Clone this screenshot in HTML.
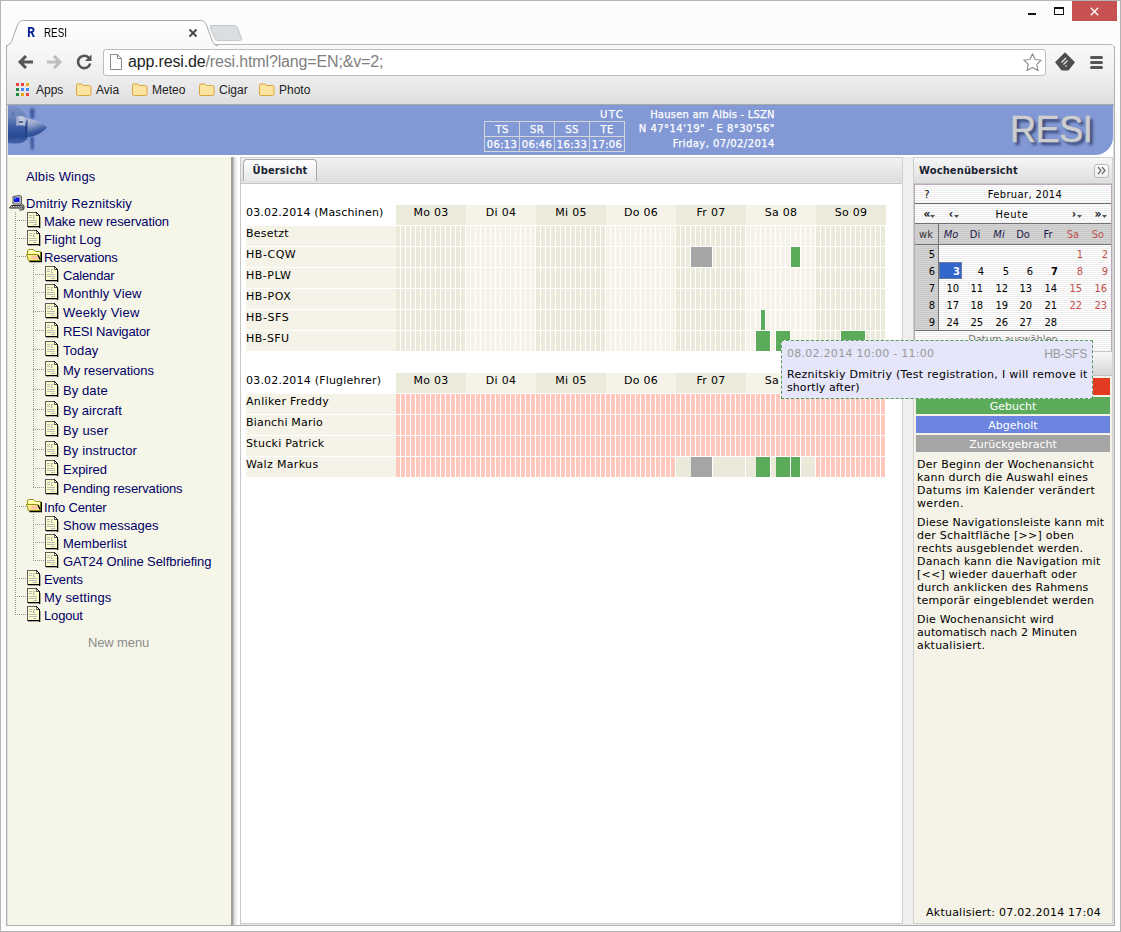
<!DOCTYPE html>
<html lang="en">
<head>
<meta charset="utf-8">
<title>RESI</title>
<style>
html,body{margin:0;padding:0;}
body{width:1121px;height:932px;position:relative;overflow:hidden;background:#fcfcfc;font-family:"DejaVu Sans","Liberation Sans",sans-serif;font-size:11px;color:#000;}
.abs{position:absolute;}
#win{position:absolute;left:0;top:0;width:1119px;height:930px;border:1px solid #b4b4b4;background:#fcfcfc;}
/* chrome */
#tab{position:absolute;left:7px;top:20px;width:212px;height:26px;}
#tabtitle{position:absolute;left:44px;top:26px;font:12px/15px "Liberation Sans",sans-serif;color:#000;transform:scaleX(.82);transform-origin:0 0;}
#toolbar{position:absolute;left:7px;top:44px;width:1107px;height:60px;border-radius:4px 4px 0 0;background:linear-gradient(#f9f9f9 0,#efefef 30px,#dedede 60px);border-top:1px solid #b9b9b9;box-sizing:border-box;}
#tbline{position:absolute;left:7px;top:104px;width:1107px;height:1px;background:#a9a9a9;}
#lb{position:absolute;left:6px;top:46px;width:1px;height:880px;background:#b0b0b0;}
#rb{position:absolute;left:1114px;top:46px;width:1px;height:880px;background:#b0b0b0;}
#lb2{position:absolute;left:7px;top:105px;width:1px;height:820px;background:#dedede;}
#rb2{position:absolute;left:1113px;top:105px;width:1px;height:820px;background:#dedede;}
#bb{position:absolute;left:6px;top:925px;width:1109px;height:1px;background:#b0b0b0;}
#urlbox{position:absolute;left:103px;top:49px;width:943px;height:27px;border:1px solid #bdbdbd;border-radius:3px;background:#fff;box-sizing:border-box;}
#url{position:absolute;left:128px;top:52px;font:16px/20px "Liberation Sans",sans-serif;color:#808080;letter-spacing:-0.15px;}
#url b{font-weight:normal;color:#222;}
.bm{position:absolute;top:83px;font:12px/14px "Liberation Sans",sans-serif;color:#222;}
/* page */
#page{position:absolute;left:8px;top:105px;width:1105px;height:820px;background:#fff;overflow:hidden;}
#hdr{position:absolute;left:0;top:0;width:1105px;height:50px;background:#8399d6;border-radius:0 0 18px 0;color:#fff;}
#hdr .t{position:absolute;font-size:10px;line-height:12px;color:#fff;white-space:nowrap;-webkit-text-stroke:0.25px #fff;}
#sun{position:absolute;left:476px;top:16px;border-collapse:collapse;}
#sun td{border:1px solid #d3d6d8;width:34px;height:14px;padding:0;text-align:center;font-size:10px;line-height:13px;color:#fff;letter-spacing:0.35px;-webkit-text-stroke:0.25px #fff;}
#resi{position:absolute;left:1002px;top:3px;font:36px/44px "Liberation Sans",sans-serif;color:#cecece;letter-spacing:-0.4px;-webkit-text-stroke:0.5px #cecece;text-shadow:3px 3px 3px rgba(40,50,95,.85);}
/* left nav */
#nav{position:absolute;left:0;top:52px;width:223px;height:768px;background:#f6f6e8;}
#split{position:absolute;left:223px;top:52px;width:7px;height:768px;background:linear-gradient(90deg,#a39b96 0,#a39b96 1.5px,#c4c4c8 2.5px,#dcdce0 3.5px,#ececf0 4.5px,#f4f4f6 6px,#fafaf0 6px,#fafaf0 7px);}
.ti{position:absolute;font:13px/16px "Liberation Sans",sans-serif;color:#000066;white-space:nowrap;}
.ic{position:absolute;width:16px;height:16px;}
.dv{position:absolute;width:1px;background-image:linear-gradient(#9a9a9a 50%,transparent 50%);background-size:1px 2px;}
.dh{position:absolute;height:1px;background-image:linear-gradient(90deg,#9a9a9a 50%,transparent 50%);background-size:2px 1px;}
/* main */
#main{position:absolute;left:232px;top:52px;width:663px;height:767px;background:#fff;border-left:1px solid #c6c6c6;border-right:1px solid #d0d0d0;border-bottom:1px solid #d0d0d0;box-sizing:border-box;}
#mtabs{position:absolute;left:0;top:0;width:661px;height:27px;background:linear-gradient(#f1f1f1,#dedede 24px,#e8e8e8 24px);border-bottom:1px solid #c4c4c4;border-top:1px solid #cfcfcf;box-sizing:border-box;}
#mtab{position:absolute;left:2px;top:1px;width:74px;height:22px;border:1px solid #a9a9a9;border-bottom:none;border-radius:4px 4px 0 0;background:linear-gradient(#ffffff,#e8e8e8 20px);box-sizing:border-box;font:bold 11px/21px "DejaVu Sans Condensed","DejaVu Sans",sans-serif;color:#1c2433;text-align:center;letter-spacing:0.15px;}
#gap{position:absolute;left:895px;top:52px;width:10px;height:768px;background:#efefef;}
#botstrip{position:absolute;left:232px;top:819px;width:873px;height:1px;background:#e6e6e6;}
.gl{position:absolute;font-size:11px;line-height:14px;white-space:nowrap;color:#000;}
.row{position:absolute;left:238px;width:640px;height:20px;background:#f5f3e7;}
.dh1,.dh2{position:absolute;width:70px;height:20px;text-align:center;font-size:11px;line-height:15px;letter-spacing:0.3px;}
.dh1{background:#eceadb;}
.dh2{background:#f5f3e7;}
.cells{position:absolute;left:388px;width:490px;height:20px;}
.bk{position:absolute;height:20px;}
/* right */
#right{position:absolute;left:905px;top:52px;width:200px;height:767px;background:#f5f3e7;border:1px solid #cfcfcf;box-sizing:border-box;}
#rh{position:absolute;left:0;top:0;width:198px;height:26px;background:linear-gradient(#f6f6f6,#dedede);border-bottom:1px solid #c4c4c4;box-sizing:border-box;}
#rh span{position:absolute;left:5px;top:6px;font:bold 11px/14px "DejaVu Sans Condensed","DejaVu Sans",sans-serif;color:#1c2433;letter-spacing:0.15px;}
#cal{position:absolute;left:0;top:26px;width:198px;height:168px;background:repeating-linear-gradient(#fff 0,#fff 1px,#ededed 1px,#ededed 2px);border:1px solid #b8a8b8;box-sizing:border-box;font-family:"DejaVu Sans Condensed","DejaVu Sans",sans-serif;}
.cr{position:absolute;left:0;width:196px;}
.c{position:absolute;font-size:11px;line-height:14px;white-space:nowrap;}
.leg{position:absolute;left:2px;width:194px;height:17px;color:#fff;text-align:center;font-size:11px;line-height:19px;overflow:hidden;}
.p{position:absolute;left:3px;font-size:11px;line-height:13px;color:#000;white-space:nowrap;}
#tip{position:absolute;left:773px;top:235px;width:312px;height:59px;box-sizing:border-box;border:1px dashed #5a9a5a;background:#e6e6fa;font-size:11px;line-height:13px;}

</style>
</head>
<body>
<div id="win"></div>
<div class="abs" style="left:1028px;top:13px;width:8px;height:2px;background:#111"></div>
<div class="abs" style="left:1054px;top:7px;width:10px;height:8px;box-sizing:border-box;border:1px solid #111;border-top-width:2px"></div>
<div class="abs" style="left:1072px;top:1px;width:45px;height:20px;background:#c75050"></div>
<svg class="abs" style="left:1090px;top:7px" width="9" height="9" viewBox="0 0 9 9"><path d="M0.8 0.8L8.2 8.2M8.2 0.8L0.8 8.2" stroke="#fff" stroke-width="1.4" fill="none"/></svg>
<div id="toolbar"></div><div id="tbline"></div><div id="lb"></div><div id="rb"></div><div id="lb2"></div><div id="rb2"></div><div id="bb"></div>
<svg class="abs" style="left:206px;top:23px" width="40" height="20" viewBox="0 0 40 20"><path d="M4.5 2.5 H28 q2.5 0 3.5 2.5 l4 10 q1 2.5 -2 2.5 H12 q-2.5 0 -3.5 -2.5 l-4 -10 q-1 -2.5 2 -2.5z" fill="#dadde2" stroke="#c4c7cc" stroke-width="1"/></svg>
<svg class="abs" style="left:4px;top:19px" width="222" height="28" viewBox="0 0 222 28"><defs><linearGradient id="tg" x1="0" y1="0" x2="0" y2="1"><stop offset="0" stop-color="#ffffff"/><stop offset="1" stop-color="#f8f8f8"/></linearGradient></defs><path d="M2 27 C6 26 7 24 8.5 20 L13.5 6 C15 2.5 16.5 1.5 20 1.5 H196 C199.5 1.5 201 2.5 202.5 6 L207.5 20 C209 24 210 26 214 27" fill="url(#tg)" stroke="#a8a8a8" stroke-width="1"/></svg>
<div class="abs" style="left:24px;top:24px;width:14px;height:16px;background:#fff"></div>
<div class="abs" style="left:27px;top:25px;font:bold 14px/16px 'Liberation Mono',monospace;color:#0a2394;transform:scaleX(.95);transform-origin:0 0">R</div>
<div id="tabtitle">RESI</div>
<svg class="abs" style="left:188px;top:28px" width="10" height="10" viewBox="0 0 10 10"><path d="M1.5 1.5L8.5 8.5M8.5 1.5L1.5 8.5" stroke="#444" stroke-width="1.8" fill="none"/></svg>
<svg class="abs" style="left:16px;top:53px" width="20" height="18" viewBox="0 0 20 18"><path d="M17 9H4.5M10 3L4 9l6 6" stroke="#555" stroke-width="3" fill="none" stroke-linejoin="miter"/></svg>
<svg class="abs" style="left:44px;top:53px" width="20" height="18" viewBox="0 0 20 18"><path d="M3 9H15.5M10 3l6 6l-6 6" stroke="#bdbdbd" stroke-width="3" fill="none"/></svg>
<svg class="abs" style="left:74px;top:52px" width="20" height="20" viewBox="0 0 20 20"><path d="M15.2 6.2A6.2 6.2 0 1 0 16.2 11.5" stroke="#555" stroke-width="2.6" fill="none"/><path d="M17.5 2.5V9H11z" fill="#555"/></svg>
<div id="urlbox"></div>
<svg class="abs" style="left:109px;top:53px" width="14" height="18" viewBox="0 0 14 18"><path d="M1.5 1.5H8.5L12.5 5.5V16.5H1.5z" fill="#fff" stroke="#8a8a8a" stroke-width="1"/><path d="M8.5 1.5V5.5H12.5" fill="none" stroke="#8a8a8a" stroke-width="1"/></svg>
<div id="url"><b>app.resi.de</b>/resi.html?lang=EN;&amp;v=2;</div>
<svg class="abs" style="left:1022px;top:52px" width="21" height="20" viewBox="0 0 21 20"><path d="M10.5 1.8l2.6 5.7 6.2.7-4.6 4.2 1.3 6.1-5.5-3.1-5.5 3.1 1.3-6.1L1.7 8.2l6.2-.7z" fill="#fff" stroke="#8c8c8c" stroke-width="1.1" stroke-linejoin="round"/></svg>
<svg class="abs" style="left:1054px;top:52px" width="22" height="20" viewBox="0 0 22 20"><path d="M11 1.2L20 10.2l-6 7.5H8L2 10.2z" fill="#4e4e4e" stroke="#4e4e4e" stroke-width="1.500" stroke-linejoin="round"/><path d="M7.5 10.5l4.5-4.5M9.5 12.5l4-4M11.5 14.5l1-1" stroke="#e9e9e9" stroke-width="1.300" fill="none"/></svg>
<div class="abs" style="left:1090px;top:56px;width:13px;height:3px;border-radius:1.5px;background:#555"></div>
<div class="abs" style="left:1090px;top:61px;width:13px;height:3px;border-radius:1.5px;background:#555"></div>
<div class="abs" style="left:1090px;top:66px;width:13px;height:3px;border-radius:1.5px;background:#555"></div>
<svg class="abs" style="left:15px;top:83px" width="15" height="14" viewBox="0 0 15 14"><rect x="1" y="0" width="3" height="3" fill="#e8453c"/><rect x="6" y="0" width="3" height="3" fill="#e8453c"/><rect x="11" y="0" width="3" height="3" fill="#f2a60d"/><rect x="1" y="5" width="3" height="3" fill="#1e8e3e"/><rect x="6" y="5" width="3" height="3" fill="#4a8af4"/><rect x="11" y="5" width="3" height="3" fill="#4a8af4"/><rect x="1" y="10" width="3" height="3" fill="#1e8e3e"/><rect x="6" y="10" width="3" height="3" fill="#f2a60d"/><rect x="11" y="10" width="3" height="3" fill="#e8453c"/></svg>
<div class="bm" style="left:36px">Apps</div>
<svg class="abs" style="left:75px;top:82px" width="17" height="15" viewBox="0 0 17 15"><path d="M1.5 3.5q0-1.5 1.5-1.5h4l1.5 1.5h6q1.5 0 1.5 1.5v7q0 1.5-1.5 1.5h-11.5q-1.5 0-1.5-1.5z" fill="#fbe3a0" stroke="#d9a53f" stroke-width="1"/></svg>
<div class="bm" style="left:96px">Avia</div>
<svg class="abs" style="left:131px;top:82px" width="17" height="15" viewBox="0 0 17 15"><path d="M1.5 3.5q0-1.5 1.5-1.5h4l1.5 1.5h6q1.5 0 1.5 1.5v7q0 1.5-1.5 1.5h-11.5q-1.5 0-1.5-1.5z" fill="#fbe3a0" stroke="#d9a53f" stroke-width="1"/></svg>
<div class="bm" style="left:152px">Meteo</div>
<svg class="abs" style="left:198px;top:82px" width="17" height="15" viewBox="0 0 17 15"><path d="M1.5 3.5q0-1.5 1.5-1.5h4l1.5 1.5h6q1.5 0 1.5 1.5v7q0 1.5-1.5 1.5h-11.5q-1.5 0-1.5-1.5z" fill="#fbe3a0" stroke="#d9a53f" stroke-width="1"/></svg>
<div class="bm" style="left:219px">Cigar</div>
<svg class="abs" style="left:258px;top:82px" width="17" height="15" viewBox="0 0 17 15"><path d="M1.5 3.5q0-1.5 1.5-1.5h4l1.5 1.5h6q1.5 0 1.5 1.5v7q0 1.5-1.5 1.5h-11.5q-1.5 0-1.5-1.5z" fill="#fbe3a0" stroke="#d9a53f" stroke-width="1"/></svg>
<div class="bm" style="left:279px">Photo</div>
<div id="page">
<div id="hdr">
<svg class="abs" style="left:0;top:0" width="56" height="50" viewBox="0 0 56 50">
<defs><linearGradient id="pg" x1="0" y1="0" x2="0" y2="1"><stop offset="0" stop-color="#7b90c4"/><stop offset=".3" stop-color="#6882bb"/><stop offset=".55" stop-color="#3c5ea6"/><stop offset=".8" stop-color="#274a93"/><stop offset="1" stop-color="#4666ae"/></linearGradient>
<linearGradient id="pg2" x1="0" y1="0" x2=".3" y2="1"><stop offset="0" stop-color="#c4cbdc"/><stop offset=".4" stop-color="#8b9cc6"/><stop offset=".75" stop-color="#3b5aa0"/><stop offset="1" stop-color="#2b4a90"/></linearGradient>
<linearGradient id="pg3" x1="0" y1="0" x2="1" y2="0"><stop offset="0" stop-color="#8ea0c8"/><stop offset=".5" stop-color="#d6dbe8"/><stop offset="1" stop-color="#9aa8cc"/></linearGradient>
<filter id="bl" x="-20%" y="-20%" width="140%" height="140%"><feGaussianBlur stdDeviation=".7"/></filter>
<filter id="bl2" x="-50%" y="-20%" width="200%" height="140%"><feGaussianBlur stdDeviation="1"/></filter></defs>
<g filter="url(#bl)">
<path d="M0 1 C7 1 14 3 17 9 C19 13 19.5 17 19.5 20 L19.5 30 C19 34 17 37 13 38 C8 39 4 38.5 0 38z" fill="url(#pg)"/>
<path d="M8 11.5 C12 10.5 16 11 19.5 13.5 L19.5 22 C16 20 11 20 8 21z" fill="url(#pg3)" opacity=".9"/>
<path d="M11 16 h4 v2 h-4z" fill="#3a4f86" opacity=".8"/>
<path d="M4 7 h2 v4 h-2z" fill="#566ea6" opacity=".7"/>
<path d="M19.5 13.5 C26 14 33 17 39 22.5 C34 28 27 31.5 19.5 32z" fill="url(#pg2)"/>
<path d="M17 22 C17 27 17.5 33 19.5 36 L19.5 14 C18 16 17 19 17 22z" fill="#1f3c82" opacity=".8"/>
</g>
<g filter="url(#bl2)">
<path d="M22 5 C23 2.5 26 2.5 26.5 5 L26 14 L22.5 13.5z" fill="#3b599f"/>
<path d="M22.5 32 L25.5 31 L25.5 43 C25 46 23.5 46 23 43z" fill="#2f4c92"/>
</g>
</svg>
<div class="t" style="right:488.9px;top:4px;letter-spacing:1.391px">UTC</div>
<table id="sun"><tr><td>TS</td><td>SR</td><td>SS</td><td>TE</td></tr><tr><td>06:13</td><td>06:46</td><td>16:33</td><td>17:06</td></tr></table>
<div class="t" style="right:338.2px;top:4px;letter-spacing:0.209px">Hausen am Albis - LSZN</div>
<div class="t" style="right:338.2px;top:18px;letter-spacing:0.466px">N 47°14'19" - E 8°30'56"</div>
<div class="t" style="right:338.2px;top:33px;letter-spacing:0.427px">Friday, 07/02/2014</div>
<div id="resi">RESI</div>
</div>
<div id="nav">
<div class="ti" style="left:18px;top:12px;letter-spacing:0.143px;">Albis Wings</div>
<svg class="ic" style="left:1px;top:38px" viewBox="0 0 16 16"><path d="M4 1.5L11 0.5L12.5 1.5V9H4z" fill="#c8c8c8" stroke="#555" stroke-width="1"/><rect x="5" y="2.500" width="5.500" height="4.500" fill="#1414e0"/><rect x="5.600" y="3.200" width="1.200" height="1" fill="#35d0f0"/><path d="M2.5 10.5H12.5L14 13H0.5z" fill="#fff" stroke="#222" stroke-width="1"/><path d="M3 11.5H12M2.5 12.3H12.5" stroke="#333" stroke-width=".7" stroke-dasharray="1 .7"/><path d="M12.5 9.5q2.5 0 2.5 3q0 2.5-3 2.5h-2" stroke="#444" stroke-width="1.200" fill="none"/></svg>
<div class="ti" style="left:18px;top:39px;letter-spacing:0.150px;">Dmitriy Reznitskiy</div>
<div class="dv" style="left:7px;top:55px;height:403px"></div>
<div class="dv" style="left:25px;top:107px;height:224px"></div>
<div class="dv" style="left:25px;top:357px;height:47px"></div>
<div class="dh" style="left:7px;top:63px;width:12px"></div>
<svg class="ic" style="left:19px;top:55px" viewBox="0 0 16 16" shape-rendering="crispEdges"><path d="M1 1H9L12 4V15H1z" fill="#fcfccb"/><path d="M9 1V4H12z" fill="#fff"/><rect x="0" y="0" width="1" height="15" fill="#5e5e5e"/><rect x="0" y="0" width="9" height="1" fill="#5e5e5e"/><rect x="9" y="0" width="1" height="1" fill="#000"/><rect x="10" y="1" width="1" height="1" fill="#000"/><rect x="11" y="2" width="1" height="1" fill="#000"/><rect x="12" y="3" width="1" height="1" fill="#000"/><rect x="9" y="1" width="1" height="3" fill="#777"/><rect x="9" y="3" width="3" height="1" fill="#555"/><rect x="12" y="4" width="1" height="12" fill="#000"/><rect x="13" y="5" width="1" height="11" fill="#000" opacity=".3"/><rect x="1" y="15" width="12" height="1" fill="#000" opacity=".3"/><rect x="1" y="14" width="12" height="1" fill="#000"/><rect x="2" y="3" width="3" height="1" fill="#bcbcbc"/><rect x="2" y="5" width="3" height="1" fill="#bcbcbc"/><rect x="6" y="3" width="2" height="1" fill="#bcbcbc"/><rect x="6" y="3" width="1" height="3" fill="#bcbcbc"/><rect x="6" y="6" width="2" height="1" fill="#bcbcbc"/><rect x="2" y="8" width="8" height="1" fill="#bcbcbc"/><rect x="2" y="10" width="8" height="1" fill="#bcbcbc"/><rect x="6" y="12" width="4" height="1" fill="#bcbcbc"/></svg>
<div class="ti" style="left:36px;top:57px;letter-spacing:-0.109px;">Make new reservation</div>
<div class="dh" style="left:7px;top:81px;width:12px"></div>
<svg class="ic" style="left:19px;top:73px" viewBox="0 0 16 16" shape-rendering="crispEdges"><path d="M1 1H9L12 4V15H1z" fill="#fcfccb"/><path d="M9 1V4H12z" fill="#fff"/><rect x="0" y="0" width="1" height="15" fill="#5e5e5e"/><rect x="0" y="0" width="9" height="1" fill="#5e5e5e"/><rect x="9" y="0" width="1" height="1" fill="#000"/><rect x="10" y="1" width="1" height="1" fill="#000"/><rect x="11" y="2" width="1" height="1" fill="#000"/><rect x="12" y="3" width="1" height="1" fill="#000"/><rect x="9" y="1" width="1" height="3" fill="#777"/><rect x="9" y="3" width="3" height="1" fill="#555"/><rect x="12" y="4" width="1" height="12" fill="#000"/><rect x="13" y="5" width="1" height="11" fill="#000" opacity=".3"/><rect x="1" y="15" width="12" height="1" fill="#000" opacity=".3"/><rect x="1" y="14" width="12" height="1" fill="#000"/><rect x="2" y="3" width="3" height="1" fill="#bcbcbc"/><rect x="2" y="5" width="3" height="1" fill="#bcbcbc"/><rect x="6" y="3" width="2" height="1" fill="#bcbcbc"/><rect x="6" y="3" width="1" height="3" fill="#bcbcbc"/><rect x="6" y="6" width="2" height="1" fill="#bcbcbc"/><rect x="2" y="8" width="8" height="1" fill="#bcbcbc"/><rect x="2" y="10" width="8" height="1" fill="#bcbcbc"/><rect x="6" y="12" width="4" height="1" fill="#bcbcbc"/></svg>
<div class="ti" style="left:36px;top:75px;letter-spacing:-0.009px;">Flight Log</div>
<div class="dh" style="left:7px;top:99px;width:12px"></div>
<svg class="ic" style="left:18px;top:91px" viewBox="0 0 16 16"><path d="M1.5 6V2.5L3 1.5H7.5L9.5 3.5H14.5V12.5H3" fill="#ffff9e" stroke="#8e8e12" stroke-width="1"/><path d="M3 2.5H7M10 4.5H13.5" stroke="#ffffff" stroke-width="1" fill="none"/><path d="M15.5 4V13.5H3.5" stroke="#000" stroke-width="1.300" fill="none"/><path d="M0.5 6.5H11.5L14 11V12.5H2.5z" fill="#ffee90" stroke="#8e8e12" stroke-width="1"/><path d="M6 7.5H11L13 11.5H4.5z" fill="#ffbfa5" opacity=".85"/><path d="M12 7L14.2 11.5" stroke="#000" stroke-width="1.300" fill="none"/></svg>
<div class="ti" style="left:36px;top:93px;letter-spacing:-0.198px;">Reservations</div>
<div class="dh" style="left:7px;top:349px;width:12px"></div>
<svg class="ic" style="left:18px;top:341px" viewBox="0 0 16 16"><path d="M1.5 6V2.5L3 1.5H7.5L9.5 3.5H14.5V12.5H3" fill="#ffff9e" stroke="#8e8e12" stroke-width="1"/><path d="M3 2.5H7M10 4.5H13.5" stroke="#ffffff" stroke-width="1" fill="none"/><path d="M15.5 4V13.5H3.5" stroke="#000" stroke-width="1.300" fill="none"/><path d="M0.5 6.5H11.5L14 11V12.5H2.5z" fill="#ffee90" stroke="#8e8e12" stroke-width="1"/><path d="M6 7.5H11L13 11.5H4.5z" fill="#ffbfa5" opacity=".85"/><path d="M12 7L14.2 11.5" stroke="#000" stroke-width="1.300" fill="none"/></svg>
<div class="ti" style="left:36px;top:343px;letter-spacing:-0.166px;">Info Center</div>
<div class="dh" style="left:7px;top:421px;width:12px"></div>
<svg class="ic" style="left:19px;top:413px" viewBox="0 0 16 16" shape-rendering="crispEdges"><path d="M1 1H9L12 4V15H1z" fill="#fcfccb"/><path d="M9 1V4H12z" fill="#fff"/><rect x="0" y="0" width="1" height="15" fill="#5e5e5e"/><rect x="0" y="0" width="9" height="1" fill="#5e5e5e"/><rect x="9" y="0" width="1" height="1" fill="#000"/><rect x="10" y="1" width="1" height="1" fill="#000"/><rect x="11" y="2" width="1" height="1" fill="#000"/><rect x="12" y="3" width="1" height="1" fill="#000"/><rect x="9" y="1" width="1" height="3" fill="#777"/><rect x="9" y="3" width="3" height="1" fill="#555"/><rect x="12" y="4" width="1" height="12" fill="#000"/><rect x="13" y="5" width="1" height="11" fill="#000" opacity=".3"/><rect x="1" y="15" width="12" height="1" fill="#000" opacity=".3"/><rect x="1" y="14" width="12" height="1" fill="#000"/><rect x="2" y="3" width="3" height="1" fill="#bcbcbc"/><rect x="2" y="5" width="3" height="1" fill="#bcbcbc"/><rect x="6" y="3" width="2" height="1" fill="#bcbcbc"/><rect x="6" y="3" width="1" height="3" fill="#bcbcbc"/><rect x="6" y="6" width="2" height="1" fill="#bcbcbc"/><rect x="2" y="8" width="8" height="1" fill="#bcbcbc"/><rect x="2" y="10" width="8" height="1" fill="#bcbcbc"/><rect x="6" y="12" width="4" height="1" fill="#bcbcbc"/></svg>
<div class="ti" style="left:36px;top:415px;letter-spacing:-0.158px;">Events</div>
<div class="dh" style="left:7px;top:439px;width:12px"></div>
<svg class="ic" style="left:19px;top:431px" viewBox="0 0 16 16" shape-rendering="crispEdges"><path d="M1 1H9L12 4V15H1z" fill="#fcfccb"/><path d="M9 1V4H12z" fill="#fff"/><rect x="0" y="0" width="1" height="15" fill="#5e5e5e"/><rect x="0" y="0" width="9" height="1" fill="#5e5e5e"/><rect x="9" y="0" width="1" height="1" fill="#000"/><rect x="10" y="1" width="1" height="1" fill="#000"/><rect x="11" y="2" width="1" height="1" fill="#000"/><rect x="12" y="3" width="1" height="1" fill="#000"/><rect x="9" y="1" width="1" height="3" fill="#777"/><rect x="9" y="3" width="3" height="1" fill="#555"/><rect x="12" y="4" width="1" height="12" fill="#000"/><rect x="13" y="5" width="1" height="11" fill="#000" opacity=".3"/><rect x="1" y="15" width="12" height="1" fill="#000" opacity=".3"/><rect x="1" y="14" width="12" height="1" fill="#000"/><rect x="2" y="3" width="3" height="1" fill="#bcbcbc"/><rect x="2" y="5" width="3" height="1" fill="#bcbcbc"/><rect x="6" y="3" width="2" height="1" fill="#bcbcbc"/><rect x="6" y="3" width="1" height="3" fill="#bcbcbc"/><rect x="6" y="6" width="2" height="1" fill="#bcbcbc"/><rect x="2" y="8" width="8" height="1" fill="#bcbcbc"/><rect x="2" y="10" width="8" height="1" fill="#bcbcbc"/><rect x="6" y="12" width="4" height="1" fill="#bcbcbc"/></svg>
<div class="ti" style="left:36px;top:433px;letter-spacing:0.159px;">My settings</div>
<div class="dh" style="left:7px;top:457px;width:12px"></div>
<svg class="ic" style="left:19px;top:449px" viewBox="0 0 16 16" shape-rendering="crispEdges"><path d="M1 1H9L12 4V15H1z" fill="#fcfccb"/><path d="M9 1V4H12z" fill="#fff"/><rect x="0" y="0" width="1" height="15" fill="#5e5e5e"/><rect x="0" y="0" width="9" height="1" fill="#5e5e5e"/><rect x="9" y="0" width="1" height="1" fill="#000"/><rect x="10" y="1" width="1" height="1" fill="#000"/><rect x="11" y="2" width="1" height="1" fill="#000"/><rect x="12" y="3" width="1" height="1" fill="#000"/><rect x="9" y="1" width="1" height="3" fill="#777"/><rect x="9" y="3" width="3" height="1" fill="#555"/><rect x="12" y="4" width="1" height="12" fill="#000"/><rect x="13" y="5" width="1" height="11" fill="#000" opacity=".3"/><rect x="1" y="15" width="12" height="1" fill="#000" opacity=".3"/><rect x="1" y="14" width="12" height="1" fill="#000"/><rect x="2" y="3" width="3" height="1" fill="#bcbcbc"/><rect x="2" y="5" width="3" height="1" fill="#bcbcbc"/><rect x="6" y="3" width="2" height="1" fill="#bcbcbc"/><rect x="6" y="3" width="1" height="3" fill="#bcbcbc"/><rect x="6" y="6" width="2" height="1" fill="#bcbcbc"/><rect x="2" y="8" width="8" height="1" fill="#bcbcbc"/><rect x="2" y="10" width="8" height="1" fill="#bcbcbc"/><rect x="6" y="12" width="4" height="1" fill="#bcbcbc"/></svg>
<div class="ti" style="left:36px;top:451px;letter-spacing:-0.161px;">Logout</div>
<div class="dh" style="left:25px;top:117px;width:12px"></div>
<svg class="ic" style="left:37px;top:109px" viewBox="0 0 16 16" shape-rendering="crispEdges"><path d="M1 1H9L12 4V15H1z" fill="#fcfccb"/><path d="M9 1V4H12z" fill="#fff"/><rect x="0" y="0" width="1" height="15" fill="#5e5e5e"/><rect x="0" y="0" width="9" height="1" fill="#5e5e5e"/><rect x="9" y="0" width="1" height="1" fill="#000"/><rect x="10" y="1" width="1" height="1" fill="#000"/><rect x="11" y="2" width="1" height="1" fill="#000"/><rect x="12" y="3" width="1" height="1" fill="#000"/><rect x="9" y="1" width="1" height="3" fill="#777"/><rect x="9" y="3" width="3" height="1" fill="#555"/><rect x="12" y="4" width="1" height="12" fill="#000"/><rect x="13" y="5" width="1" height="11" fill="#000" opacity=".3"/><rect x="1" y="15" width="12" height="1" fill="#000" opacity=".3"/><rect x="1" y="14" width="12" height="1" fill="#000"/><rect x="2" y="3" width="3" height="1" fill="#bcbcbc"/><rect x="2" y="5" width="3" height="1" fill="#bcbcbc"/><rect x="6" y="3" width="2" height="1" fill="#bcbcbc"/><rect x="6" y="3" width="1" height="3" fill="#bcbcbc"/><rect x="6" y="6" width="2" height="1" fill="#bcbcbc"/><rect x="2" y="8" width="8" height="1" fill="#bcbcbc"/><rect x="2" y="10" width="8" height="1" fill="#bcbcbc"/><rect x="6" y="12" width="4" height="1" fill="#bcbcbc"/></svg>
<div class="ti" style="left:55px;top:111px;letter-spacing:-0.158px;">Calendar</div>
<div class="dh" style="left:25px;top:135px;width:12px"></div>
<svg class="ic" style="left:37px;top:127px" viewBox="0 0 16 16" shape-rendering="crispEdges"><path d="M1 1H9L12 4V15H1z" fill="#fcfccb"/><path d="M9 1V4H12z" fill="#fff"/><rect x="0" y="0" width="1" height="15" fill="#5e5e5e"/><rect x="0" y="0" width="9" height="1" fill="#5e5e5e"/><rect x="9" y="0" width="1" height="1" fill="#000"/><rect x="10" y="1" width="1" height="1" fill="#000"/><rect x="11" y="2" width="1" height="1" fill="#000"/><rect x="12" y="3" width="1" height="1" fill="#000"/><rect x="9" y="1" width="1" height="3" fill="#777"/><rect x="9" y="3" width="3" height="1" fill="#555"/><rect x="12" y="4" width="1" height="12" fill="#000"/><rect x="13" y="5" width="1" height="11" fill="#000" opacity=".3"/><rect x="1" y="15" width="12" height="1" fill="#000" opacity=".3"/><rect x="1" y="14" width="12" height="1" fill="#000"/><rect x="2" y="3" width="3" height="1" fill="#bcbcbc"/><rect x="2" y="5" width="3" height="1" fill="#bcbcbc"/><rect x="6" y="3" width="2" height="1" fill="#bcbcbc"/><rect x="6" y="3" width="1" height="3" fill="#bcbcbc"/><rect x="6" y="6" width="2" height="1" fill="#bcbcbc"/><rect x="2" y="8" width="8" height="1" fill="#bcbcbc"/><rect x="2" y="10" width="8" height="1" fill="#bcbcbc"/><rect x="6" y="12" width="4" height="1" fill="#bcbcbc"/></svg>
<div class="ti" style="left:55px;top:129px;letter-spacing:0.118px;">Monthly View</div>
<div class="dh" style="left:25px;top:154px;width:12px"></div>
<svg class="ic" style="left:37px;top:146px" viewBox="0 0 16 16" shape-rendering="crispEdges"><path d="M1 1H9L12 4V15H1z" fill="#fcfccb"/><path d="M9 1V4H12z" fill="#fff"/><rect x="0" y="0" width="1" height="15" fill="#5e5e5e"/><rect x="0" y="0" width="9" height="1" fill="#5e5e5e"/><rect x="9" y="0" width="1" height="1" fill="#000"/><rect x="10" y="1" width="1" height="1" fill="#000"/><rect x="11" y="2" width="1" height="1" fill="#000"/><rect x="12" y="3" width="1" height="1" fill="#000"/><rect x="9" y="1" width="1" height="3" fill="#777"/><rect x="9" y="3" width="3" height="1" fill="#555"/><rect x="12" y="4" width="1" height="12" fill="#000"/><rect x="13" y="5" width="1" height="11" fill="#000" opacity=".3"/><rect x="1" y="15" width="12" height="1" fill="#000" opacity=".3"/><rect x="1" y="14" width="12" height="1" fill="#000"/><rect x="2" y="3" width="3" height="1" fill="#bcbcbc"/><rect x="2" y="5" width="3" height="1" fill="#bcbcbc"/><rect x="6" y="3" width="2" height="1" fill="#bcbcbc"/><rect x="6" y="3" width="1" height="3" fill="#bcbcbc"/><rect x="6" y="6" width="2" height="1" fill="#bcbcbc"/><rect x="2" y="8" width="8" height="1" fill="#bcbcbc"/><rect x="2" y="10" width="8" height="1" fill="#bcbcbc"/><rect x="6" y="12" width="4" height="1" fill="#bcbcbc"/></svg>
<div class="ti" style="left:55px;top:148px;letter-spacing:0.233px;">Weekly View</div>
<div class="dh" style="left:25px;top:173px;width:12px"></div>
<svg class="ic" style="left:37px;top:165px" viewBox="0 0 16 16" shape-rendering="crispEdges"><path d="M1 1H9L12 4V15H1z" fill="#fcfccb"/><path d="M9 1V4H12z" fill="#fff"/><rect x="0" y="0" width="1" height="15" fill="#5e5e5e"/><rect x="0" y="0" width="9" height="1" fill="#5e5e5e"/><rect x="9" y="0" width="1" height="1" fill="#000"/><rect x="10" y="1" width="1" height="1" fill="#000"/><rect x="11" y="2" width="1" height="1" fill="#000"/><rect x="12" y="3" width="1" height="1" fill="#000"/><rect x="9" y="1" width="1" height="3" fill="#777"/><rect x="9" y="3" width="3" height="1" fill="#555"/><rect x="12" y="4" width="1" height="12" fill="#000"/><rect x="13" y="5" width="1" height="11" fill="#000" opacity=".3"/><rect x="1" y="15" width="12" height="1" fill="#000" opacity=".3"/><rect x="1" y="14" width="12" height="1" fill="#000"/><rect x="2" y="3" width="3" height="1" fill="#bcbcbc"/><rect x="2" y="5" width="3" height="1" fill="#bcbcbc"/><rect x="6" y="3" width="2" height="1" fill="#bcbcbc"/><rect x="6" y="3" width="1" height="3" fill="#bcbcbc"/><rect x="6" y="6" width="2" height="1" fill="#bcbcbc"/><rect x="2" y="8" width="8" height="1" fill="#bcbcbc"/><rect x="2" y="10" width="8" height="1" fill="#bcbcbc"/><rect x="6" y="12" width="4" height="1" fill="#bcbcbc"/></svg>
<div class="ti" style="left:55px;top:167px;letter-spacing:-0.178px;">RESI Navigator</div>
<div class="dh" style="left:25px;top:192px;width:12px"></div>
<svg class="ic" style="left:37px;top:184px" viewBox="0 0 16 16" shape-rendering="crispEdges"><path d="M1 1H9L12 4V15H1z" fill="#fcfccb"/><path d="M9 1V4H12z" fill="#fff"/><rect x="0" y="0" width="1" height="15" fill="#5e5e5e"/><rect x="0" y="0" width="9" height="1" fill="#5e5e5e"/><rect x="9" y="0" width="1" height="1" fill="#000"/><rect x="10" y="1" width="1" height="1" fill="#000"/><rect x="11" y="2" width="1" height="1" fill="#000"/><rect x="12" y="3" width="1" height="1" fill="#000"/><rect x="9" y="1" width="1" height="3" fill="#777"/><rect x="9" y="3" width="3" height="1" fill="#555"/><rect x="12" y="4" width="1" height="12" fill="#000"/><rect x="13" y="5" width="1" height="11" fill="#000" opacity=".3"/><rect x="1" y="15" width="12" height="1" fill="#000" opacity=".3"/><rect x="1" y="14" width="12" height="1" fill="#000"/><rect x="2" y="3" width="3" height="1" fill="#bcbcbc"/><rect x="2" y="5" width="3" height="1" fill="#bcbcbc"/><rect x="6" y="3" width="2" height="1" fill="#bcbcbc"/><rect x="6" y="3" width="1" height="3" fill="#bcbcbc"/><rect x="6" y="6" width="2" height="1" fill="#bcbcbc"/><rect x="2" y="8" width="8" height="1" fill="#bcbcbc"/><rect x="2" y="10" width="8" height="1" fill="#bcbcbc"/><rect x="6" y="12" width="4" height="1" fill="#bcbcbc"/></svg>
<div class="ti" style="left:55px;top:186px;letter-spacing:0.159px;">Today</div>
<div class="dh" style="left:25px;top:212px;width:12px"></div>
<svg class="ic" style="left:37px;top:204px" viewBox="0 0 16 16" shape-rendering="crispEdges"><path d="M1 1H9L12 4V15H1z" fill="#fcfccb"/><path d="M9 1V4H12z" fill="#fff"/><rect x="0" y="0" width="1" height="15" fill="#5e5e5e"/><rect x="0" y="0" width="9" height="1" fill="#5e5e5e"/><rect x="9" y="0" width="1" height="1" fill="#000"/><rect x="10" y="1" width="1" height="1" fill="#000"/><rect x="11" y="2" width="1" height="1" fill="#000"/><rect x="12" y="3" width="1" height="1" fill="#000"/><rect x="9" y="1" width="1" height="3" fill="#777"/><rect x="9" y="3" width="3" height="1" fill="#555"/><rect x="12" y="4" width="1" height="12" fill="#000"/><rect x="13" y="5" width="1" height="11" fill="#000" opacity=".3"/><rect x="1" y="15" width="12" height="1" fill="#000" opacity=".3"/><rect x="1" y="14" width="12" height="1" fill="#000"/><rect x="2" y="3" width="3" height="1" fill="#bcbcbc"/><rect x="2" y="5" width="3" height="1" fill="#bcbcbc"/><rect x="6" y="3" width="2" height="1" fill="#bcbcbc"/><rect x="6" y="3" width="1" height="3" fill="#bcbcbc"/><rect x="6" y="6" width="2" height="1" fill="#bcbcbc"/><rect x="2" y="8" width="8" height="1" fill="#bcbcbc"/><rect x="2" y="10" width="8" height="1" fill="#bcbcbc"/><rect x="6" y="12" width="4" height="1" fill="#bcbcbc"/></svg>
<div class="ti" style="left:55px;top:206px;letter-spacing:-0.057px;">My reservations</div>
<div class="dh" style="left:25px;top:232px;width:12px"></div>
<svg class="ic" style="left:37px;top:224px" viewBox="0 0 16 16" shape-rendering="crispEdges"><path d="M1 1H9L12 4V15H1z" fill="#fcfccb"/><path d="M9 1V4H12z" fill="#fff"/><rect x="0" y="0" width="1" height="15" fill="#5e5e5e"/><rect x="0" y="0" width="9" height="1" fill="#5e5e5e"/><rect x="9" y="0" width="1" height="1" fill="#000"/><rect x="10" y="1" width="1" height="1" fill="#000"/><rect x="11" y="2" width="1" height="1" fill="#000"/><rect x="12" y="3" width="1" height="1" fill="#000"/><rect x="9" y="1" width="1" height="3" fill="#777"/><rect x="9" y="3" width="3" height="1" fill="#555"/><rect x="12" y="4" width="1" height="12" fill="#000"/><rect x="13" y="5" width="1" height="11" fill="#000" opacity=".3"/><rect x="1" y="15" width="12" height="1" fill="#000" opacity=".3"/><rect x="1" y="14" width="12" height="1" fill="#000"/><rect x="2" y="3" width="3" height="1" fill="#bcbcbc"/><rect x="2" y="5" width="3" height="1" fill="#bcbcbc"/><rect x="6" y="3" width="2" height="1" fill="#bcbcbc"/><rect x="6" y="3" width="1" height="3" fill="#bcbcbc"/><rect x="6" y="6" width="2" height="1" fill="#bcbcbc"/><rect x="2" y="8" width="8" height="1" fill="#bcbcbc"/><rect x="2" y="10" width="8" height="1" fill="#bcbcbc"/><rect x="6" y="12" width="4" height="1" fill="#bcbcbc"/></svg>
<div class="ti" style="left:55px;top:226px;letter-spacing:0.087px;">By date</div>
<div class="dh" style="left:25px;top:252px;width:12px"></div>
<svg class="ic" style="left:37px;top:244px" viewBox="0 0 16 16" shape-rendering="crispEdges"><path d="M1 1H9L12 4V15H1z" fill="#fcfccb"/><path d="M9 1V4H12z" fill="#fff"/><rect x="0" y="0" width="1" height="15" fill="#5e5e5e"/><rect x="0" y="0" width="9" height="1" fill="#5e5e5e"/><rect x="9" y="0" width="1" height="1" fill="#000"/><rect x="10" y="1" width="1" height="1" fill="#000"/><rect x="11" y="2" width="1" height="1" fill="#000"/><rect x="12" y="3" width="1" height="1" fill="#000"/><rect x="9" y="1" width="1" height="3" fill="#777"/><rect x="9" y="3" width="3" height="1" fill="#555"/><rect x="12" y="4" width="1" height="12" fill="#000"/><rect x="13" y="5" width="1" height="11" fill="#000" opacity=".3"/><rect x="1" y="15" width="12" height="1" fill="#000" opacity=".3"/><rect x="1" y="14" width="12" height="1" fill="#000"/><rect x="2" y="3" width="3" height="1" fill="#bcbcbc"/><rect x="2" y="5" width="3" height="1" fill="#bcbcbc"/><rect x="6" y="3" width="2" height="1" fill="#bcbcbc"/><rect x="6" y="3" width="1" height="3" fill="#bcbcbc"/><rect x="6" y="6" width="2" height="1" fill="#bcbcbc"/><rect x="2" y="8" width="8" height="1" fill="#bcbcbc"/><rect x="2" y="10" width="8" height="1" fill="#bcbcbc"/><rect x="6" y="12" width="4" height="1" fill="#bcbcbc"/></svg>
<div class="ti" style="left:55px;top:246px;letter-spacing:0.026px;">By aircraft</div>
<div class="dh" style="left:25px;top:272px;width:12px"></div>
<svg class="ic" style="left:37px;top:264px" viewBox="0 0 16 16" shape-rendering="crispEdges"><path d="M1 1H9L12 4V15H1z" fill="#fcfccb"/><path d="M9 1V4H12z" fill="#fff"/><rect x="0" y="0" width="1" height="15" fill="#5e5e5e"/><rect x="0" y="0" width="9" height="1" fill="#5e5e5e"/><rect x="9" y="0" width="1" height="1" fill="#000"/><rect x="10" y="1" width="1" height="1" fill="#000"/><rect x="11" y="2" width="1" height="1" fill="#000"/><rect x="12" y="3" width="1" height="1" fill="#000"/><rect x="9" y="1" width="1" height="3" fill="#777"/><rect x="9" y="3" width="3" height="1" fill="#555"/><rect x="12" y="4" width="1" height="12" fill="#000"/><rect x="13" y="5" width="1" height="11" fill="#000" opacity=".3"/><rect x="1" y="15" width="12" height="1" fill="#000" opacity=".3"/><rect x="1" y="14" width="12" height="1" fill="#000"/><rect x="2" y="3" width="3" height="1" fill="#bcbcbc"/><rect x="2" y="5" width="3" height="1" fill="#bcbcbc"/><rect x="6" y="3" width="2" height="1" fill="#bcbcbc"/><rect x="6" y="3" width="1" height="3" fill="#bcbcbc"/><rect x="6" y="6" width="2" height="1" fill="#bcbcbc"/><rect x="2" y="8" width="8" height="1" fill="#bcbcbc"/><rect x="2" y="10" width="8" height="1" fill="#bcbcbc"/><rect x="6" y="12" width="4" height="1" fill="#bcbcbc"/></svg>
<div class="ti" style="left:55px;top:266px;letter-spacing:0.203px;">By user</div>
<div class="dh" style="left:25px;top:292px;width:12px"></div>
<svg class="ic" style="left:37px;top:284px" viewBox="0 0 16 16" shape-rendering="crispEdges"><path d="M1 1H9L12 4V15H1z" fill="#fcfccb"/><path d="M9 1V4H12z" fill="#fff"/><rect x="0" y="0" width="1" height="15" fill="#5e5e5e"/><rect x="0" y="0" width="9" height="1" fill="#5e5e5e"/><rect x="9" y="0" width="1" height="1" fill="#000"/><rect x="10" y="1" width="1" height="1" fill="#000"/><rect x="11" y="2" width="1" height="1" fill="#000"/><rect x="12" y="3" width="1" height="1" fill="#000"/><rect x="9" y="1" width="1" height="3" fill="#777"/><rect x="9" y="3" width="3" height="1" fill="#555"/><rect x="12" y="4" width="1" height="12" fill="#000"/><rect x="13" y="5" width="1" height="11" fill="#000" opacity=".3"/><rect x="1" y="15" width="12" height="1" fill="#000" opacity=".3"/><rect x="1" y="14" width="12" height="1" fill="#000"/><rect x="2" y="3" width="3" height="1" fill="#bcbcbc"/><rect x="2" y="5" width="3" height="1" fill="#bcbcbc"/><rect x="6" y="3" width="2" height="1" fill="#bcbcbc"/><rect x="6" y="3" width="1" height="3" fill="#bcbcbc"/><rect x="6" y="6" width="2" height="1" fill="#bcbcbc"/><rect x="2" y="8" width="8" height="1" fill="#bcbcbc"/><rect x="2" y="10" width="8" height="1" fill="#bcbcbc"/><rect x="6" y="12" width="4" height="1" fill="#bcbcbc"/></svg>
<div class="ti" style="left:55px;top:286px;letter-spacing:0.142px;">By instructor</div>
<div class="dh" style="left:25px;top:311px;width:12px"></div>
<svg class="ic" style="left:37px;top:303px" viewBox="0 0 16 16" shape-rendering="crispEdges"><path d="M1 1H9L12 4V15H1z" fill="#fcfccb"/><path d="M9 1V4H12z" fill="#fff"/><rect x="0" y="0" width="1" height="15" fill="#5e5e5e"/><rect x="0" y="0" width="9" height="1" fill="#5e5e5e"/><rect x="9" y="0" width="1" height="1" fill="#000"/><rect x="10" y="1" width="1" height="1" fill="#000"/><rect x="11" y="2" width="1" height="1" fill="#000"/><rect x="12" y="3" width="1" height="1" fill="#000"/><rect x="9" y="1" width="1" height="3" fill="#777"/><rect x="9" y="3" width="3" height="1" fill="#555"/><rect x="12" y="4" width="1" height="12" fill="#000"/><rect x="13" y="5" width="1" height="11" fill="#000" opacity=".3"/><rect x="1" y="15" width="12" height="1" fill="#000" opacity=".3"/><rect x="1" y="14" width="12" height="1" fill="#000"/><rect x="2" y="3" width="3" height="1" fill="#bcbcbc"/><rect x="2" y="5" width="3" height="1" fill="#bcbcbc"/><rect x="6" y="3" width="2" height="1" fill="#bcbcbc"/><rect x="6" y="3" width="1" height="3" fill="#bcbcbc"/><rect x="6" y="6" width="2" height="1" fill="#bcbcbc"/><rect x="2" y="8" width="8" height="1" fill="#bcbcbc"/><rect x="2" y="10" width="8" height="1" fill="#bcbcbc"/><rect x="6" y="12" width="4" height="1" fill="#bcbcbc"/></svg>
<div class="ti" style="left:55px;top:305px;letter-spacing:-0.011px;">Expired</div>
<div class="dh" style="left:25px;top:330px;width:12px"></div>
<svg class="ic" style="left:37px;top:322px" viewBox="0 0 16 16" shape-rendering="crispEdges"><path d="M1 1H9L12 4V15H1z" fill="#fcfccb"/><path d="M9 1V4H12z" fill="#fff"/><rect x="0" y="0" width="1" height="15" fill="#5e5e5e"/><rect x="0" y="0" width="9" height="1" fill="#5e5e5e"/><rect x="9" y="0" width="1" height="1" fill="#000"/><rect x="10" y="1" width="1" height="1" fill="#000"/><rect x="11" y="2" width="1" height="1" fill="#000"/><rect x="12" y="3" width="1" height="1" fill="#000"/><rect x="9" y="1" width="1" height="3" fill="#777"/><rect x="9" y="3" width="3" height="1" fill="#555"/><rect x="12" y="4" width="1" height="12" fill="#000"/><rect x="13" y="5" width="1" height="11" fill="#000" opacity=".3"/><rect x="1" y="15" width="12" height="1" fill="#000" opacity=".3"/><rect x="1" y="14" width="12" height="1" fill="#000"/><rect x="2" y="3" width="3" height="1" fill="#bcbcbc"/><rect x="2" y="5" width="3" height="1" fill="#bcbcbc"/><rect x="6" y="3" width="2" height="1" fill="#bcbcbc"/><rect x="6" y="3" width="1" height="3" fill="#bcbcbc"/><rect x="6" y="6" width="2" height="1" fill="#bcbcbc"/><rect x="2" y="8" width="8" height="1" fill="#bcbcbc"/><rect x="2" y="10" width="8" height="1" fill="#bcbcbc"/><rect x="6" y="12" width="4" height="1" fill="#bcbcbc"/></svg>
<div class="ti" style="left:55px;top:324px;letter-spacing:-0.132px;">Pending reservations</div>
<div class="dh" style="left:25px;top:367px;width:12px"></div>
<svg class="ic" style="left:37px;top:359px" viewBox="0 0 16 16" shape-rendering="crispEdges"><path d="M1 1H9L12 4V15H1z" fill="#fcfccb"/><path d="M9 1V4H12z" fill="#fff"/><rect x="0" y="0" width="1" height="15" fill="#5e5e5e"/><rect x="0" y="0" width="9" height="1" fill="#5e5e5e"/><rect x="9" y="0" width="1" height="1" fill="#000"/><rect x="10" y="1" width="1" height="1" fill="#000"/><rect x="11" y="2" width="1" height="1" fill="#000"/><rect x="12" y="3" width="1" height="1" fill="#000"/><rect x="9" y="1" width="1" height="3" fill="#777"/><rect x="9" y="3" width="3" height="1" fill="#555"/><rect x="12" y="4" width="1" height="12" fill="#000"/><rect x="13" y="5" width="1" height="11" fill="#000" opacity=".3"/><rect x="1" y="15" width="12" height="1" fill="#000" opacity=".3"/><rect x="1" y="14" width="12" height="1" fill="#000"/><rect x="2" y="3" width="3" height="1" fill="#bcbcbc"/><rect x="2" y="5" width="3" height="1" fill="#bcbcbc"/><rect x="6" y="3" width="2" height="1" fill="#bcbcbc"/><rect x="6" y="3" width="1" height="3" fill="#bcbcbc"/><rect x="6" y="6" width="2" height="1" fill="#bcbcbc"/><rect x="2" y="8" width="8" height="1" fill="#bcbcbc"/><rect x="2" y="10" width="8" height="1" fill="#bcbcbc"/><rect x="6" y="12" width="4" height="1" fill="#bcbcbc"/></svg>
<div class="ti" style="left:55px;top:361px;letter-spacing:0.008px;">Show messages</div>
<div class="dh" style="left:25px;top:385px;width:12px"></div>
<svg class="ic" style="left:37px;top:377px" viewBox="0 0 16 16" shape-rendering="crispEdges"><path d="M1 1H9L12 4V15H1z" fill="#fcfccb"/><path d="M9 1V4H12z" fill="#fff"/><rect x="0" y="0" width="1" height="15" fill="#5e5e5e"/><rect x="0" y="0" width="9" height="1" fill="#5e5e5e"/><rect x="9" y="0" width="1" height="1" fill="#000"/><rect x="10" y="1" width="1" height="1" fill="#000"/><rect x="11" y="2" width="1" height="1" fill="#000"/><rect x="12" y="3" width="1" height="1" fill="#000"/><rect x="9" y="1" width="1" height="3" fill="#777"/><rect x="9" y="3" width="3" height="1" fill="#555"/><rect x="12" y="4" width="1" height="12" fill="#000"/><rect x="13" y="5" width="1" height="11" fill="#000" opacity=".3"/><rect x="1" y="15" width="12" height="1" fill="#000" opacity=".3"/><rect x="1" y="14" width="12" height="1" fill="#000"/><rect x="2" y="3" width="3" height="1" fill="#bcbcbc"/><rect x="2" y="5" width="3" height="1" fill="#bcbcbc"/><rect x="6" y="3" width="2" height="1" fill="#bcbcbc"/><rect x="6" y="3" width="1" height="3" fill="#bcbcbc"/><rect x="6" y="6" width="2" height="1" fill="#bcbcbc"/><rect x="2" y="8" width="8" height="1" fill="#bcbcbc"/><rect x="2" y="10" width="8" height="1" fill="#bcbcbc"/><rect x="6" y="12" width="4" height="1" fill="#bcbcbc"/></svg>
<div class="ti" style="left:55px;top:379px;letter-spacing:0.022px;">Memberlist</div>
<div class="dh" style="left:25px;top:403px;width:12px"></div>
<svg class="ic" style="left:37px;top:395px" viewBox="0 0 16 16" shape-rendering="crispEdges"><path d="M1 1H9L12 4V15H1z" fill="#fcfccb"/><path d="M9 1V4H12z" fill="#fff"/><rect x="0" y="0" width="1" height="15" fill="#5e5e5e"/><rect x="0" y="0" width="9" height="1" fill="#5e5e5e"/><rect x="9" y="0" width="1" height="1" fill="#000"/><rect x="10" y="1" width="1" height="1" fill="#000"/><rect x="11" y="2" width="1" height="1" fill="#000"/><rect x="12" y="3" width="1" height="1" fill="#000"/><rect x="9" y="1" width="1" height="3" fill="#777"/><rect x="9" y="3" width="3" height="1" fill="#555"/><rect x="12" y="4" width="1" height="12" fill="#000"/><rect x="13" y="5" width="1" height="11" fill="#000" opacity=".3"/><rect x="1" y="15" width="12" height="1" fill="#000" opacity=".3"/><rect x="1" y="14" width="12" height="1" fill="#000"/><rect x="2" y="3" width="3" height="1" fill="#bcbcbc"/><rect x="2" y="5" width="3" height="1" fill="#bcbcbc"/><rect x="6" y="3" width="2" height="1" fill="#bcbcbc"/><rect x="6" y="3" width="1" height="3" fill="#bcbcbc"/><rect x="6" y="6" width="2" height="1" fill="#bcbcbc"/><rect x="2" y="8" width="8" height="1" fill="#bcbcbc"/><rect x="2" y="10" width="8" height="1" fill="#bcbcbc"/><rect x="6" y="12" width="4" height="1" fill="#bcbcbc"/></svg>
<div class="ti" style="left:55px;top:397px;letter-spacing:-0.070px;">GAT24 Online Selfbriefing</div>
<div class="ti" style="left:80px;top:478px;letter-spacing:-0.130px;color:#8c8c8c">New menu</div>
</div><div id="split"></div>
<div id="main"><div id="mtabs"><div id="mtab">Übersicht</div></div>
<div class="gl" style="left:5px;top:49px;letter-spacing:0.168px">03.02.2014 (Maschinen)</div>
<div class="dh1" style="left:155px;top:48px">Mo 03</div>
<div class="dh2" style="left:225px;top:48px">Di 04</div>
<div class="dh1" style="left:295px;top:48px">Mi 05</div>
<div class="dh2" style="left:365px;top:48px">Do 06</div>
<div class="dh1" style="left:435px;top:48px">Fr 07</div>
<div class="dh2" style="left:505px;top:48px">Sa 08</div>
<div class="dh1" style="left:575px;top:48px">So 09</div>
<div class="row" style="left:5px;top:69px;width:150px"><span class="gl" style="left:0;top:1px;letter-spacing:0.226px">Besetzt</span></div>
<div class="cells" style="left:155px;top:69px;background:repeating-linear-gradient(90deg,transparent 0,transparent 4px,#fff 4px,#fff 5px),linear-gradient(90deg,#ebe9da 0px,#ebe9da 70px,#f5f3e7 70px,#f5f3e7 140px,#ebe9da 140px,#ebe9da 210px,#f5f3e7 210px,#f5f3e7 280px,#ebe9da 280px,#ebe9da 350px,#f5f3e7 350px,#f5f3e7 420px,#ebe9da 420px,#ebe9da 490px);"></div>
<div class="row" style="left:5px;top:90px;width:150px"><span class="gl" style="left:0;top:1px;letter-spacing:0.547px">HB-CQW</span></div>
<div class="cells" style="left:155px;top:90px;background:repeating-linear-gradient(90deg,transparent 0,transparent 4px,#fff 4px,#fff 5px),linear-gradient(90deg,#ebe9da 0px,#ebe9da 70px,#f5f3e7 70px,#f5f3e7 140px,#ebe9da 140px,#ebe9da 210px,#f5f3e7 210px,#f5f3e7 280px,#ebe9da 280px,#ebe9da 350px,#f5f3e7 350px,#f5f3e7 420px,#ebe9da 420px,#ebe9da 490px);"></div>
<div class="bk" style="left:450px;top:90px;width:22px;background:#fff"></div>
<div class="bk" style="left:450px;top:90px;width:21px;background:#a5a5a5"></div>
<div class="bk" style="left:550px;top:90px;width:10px;background:#fff"></div>
<div class="bk" style="left:550px;top:90px;width:9px;background:#5bab5b"></div>
<div class="row" style="left:5px;top:111px;width:150px"><span class="gl" style="left:0;top:1px;letter-spacing:0.496px">HB-PLW</span></div>
<div class="cells" style="left:155px;top:111px;background:repeating-linear-gradient(90deg,transparent 0,transparent 4px,#fff 4px,#fff 5px),linear-gradient(90deg,#ebe9da 0px,#ebe9da 70px,#f5f3e7 70px,#f5f3e7 140px,#ebe9da 140px,#ebe9da 210px,#f5f3e7 210px,#f5f3e7 280px,#ebe9da 280px,#ebe9da 350px,#f5f3e7 350px,#f5f3e7 420px,#ebe9da 420px,#ebe9da 490px);"></div>
<div class="row" style="left:5px;top:132px;width:150px"><span class="gl" style="left:0;top:1px;letter-spacing:0.580px">HB-POX</span></div>
<div class="cells" style="left:155px;top:132px;background:repeating-linear-gradient(90deg,transparent 0,transparent 4px,#fff 4px,#fff 5px),linear-gradient(90deg,#ebe9da 0px,#ebe9da 70px,#f5f3e7 70px,#f5f3e7 140px,#ebe9da 140px,#ebe9da 210px,#f5f3e7 210px,#f5f3e7 280px,#ebe9da 280px,#ebe9da 350px,#f5f3e7 350px,#f5f3e7 420px,#ebe9da 420px,#ebe9da 490px);"></div>
<div class="row" style="left:5px;top:153px;width:150px"><span class="gl" style="left:0;top:1px;letter-spacing:0.585px">HB-SFS</span></div>
<div class="cells" style="left:155px;top:153px;background:repeating-linear-gradient(90deg,transparent 0,transparent 4px,#fff 4px,#fff 5px),linear-gradient(90deg,#ebe9da 0px,#ebe9da 70px,#f5f3e7 70px,#f5f3e7 140px,#ebe9da 140px,#ebe9da 210px,#f5f3e7 210px,#f5f3e7 280px,#ebe9da 280px,#ebe9da 350px,#f5f3e7 350px,#f5f3e7 420px,#ebe9da 420px,#ebe9da 490px);"></div>
<div class="bk" style="left:520px;top:153px;width:5px;background:#fff"></div>
<div class="bk" style="left:520px;top:153px;width:4px;background:#5bab5b"></div>
<div class="row" style="left:5px;top:174px;width:150px"><span class="gl" style="left:0;top:1px;letter-spacing:0.374px">HB-SFU</span></div>
<div class="cells" style="left:155px;top:174px;background:repeating-linear-gradient(90deg,transparent 0,transparent 4px,#fff 4px,#fff 5px),linear-gradient(90deg,#ebe9da 0px,#ebe9da 70px,#f5f3e7 70px,#f5f3e7 140px,#ebe9da 140px,#ebe9da 210px,#f5f3e7 210px,#f5f3e7 280px,#ebe9da 280px,#ebe9da 350px,#f5f3e7 350px,#f5f3e7 420px,#ebe9da 420px,#ebe9da 490px);"></div>
<div class="bk" style="left:515px;top:174px;width:15px;background:#fff"></div>
<div class="bk" style="left:515px;top:174px;width:14px;background:#5bab5b"></div>
<div class="bk" style="left:535px;top:174px;width:15px;background:#fff"></div>
<div class="bk" style="left:535px;top:174px;width:14px;background:#5bab5b"></div>
<div class="bk" style="left:600px;top:174px;width:25px;background:#fff"></div>
<div class="bk" style="left:600px;top:174px;width:24px;background:#5bab5b"></div>
<div class="gl" style="left:5px;top:217px;letter-spacing:0.197px">03.02.2014 (Fluglehrer)</div>
<div class="dh1" style="left:155px;top:216px">Mo 03</div>
<div class="dh2" style="left:225px;top:216px">Di 04</div>
<div class="dh1" style="left:295px;top:216px">Mi 05</div>
<div class="dh2" style="left:365px;top:216px">Do 06</div>
<div class="dh1" style="left:435px;top:216px">Fr 07</div>
<div class="dh2" style="left:505px;top:216px">Sa 08</div>
<div class="dh1" style="left:575px;top:216px">So 09</div>
<div class="row" style="left:5px;top:237px;width:150px"><span class="gl" style="left:0;top:1px;letter-spacing:0.340px">Anliker Freddy</span></div>
<div class="cells" style="left:155px;top:237px;background:repeating-linear-gradient(90deg,transparent 0,transparent 4px,#fff 4px,#fff 5px),linear-gradient(#ffc8bc,#ffc8bc);"></div>
<div class="row" style="left:5px;top:258px;width:150px"><span class="gl" style="left:0;top:1px;letter-spacing:0.182px">Bianchi Mario</span></div>
<div class="cells" style="left:155px;top:258px;background:repeating-linear-gradient(90deg,transparent 0,transparent 4px,#fff 4px,#fff 5px),linear-gradient(#ffc8bc,#ffc8bc);"></div>
<div class="row" style="left:5px;top:279px;width:150px"><span class="gl" style="left:0;top:1px;letter-spacing:0.290px">Stucki Patrick</span></div>
<div class="cells" style="left:155px;top:279px;background:repeating-linear-gradient(90deg,transparent 0,transparent 4px,#fff 4px,#fff 5px),linear-gradient(#ffc8bc,#ffc8bc);"></div>
<div class="row" style="left:5px;top:300px;width:150px"><span class="gl" style="left:0;top:1px;letter-spacing:0.342px">Walz Markus</span></div>
<div class="cells" style="left:155px;top:300px;background:repeating-linear-gradient(90deg,transparent 0,transparent 4px,#fff 4px,#fff 5px),linear-gradient(#ffc8bc,#ffc8bc);"></div>
<div class="bk" style="left:435px;top:300px;width:15px;background:#fff"></div>
<div class="bk" style="left:435px;top:300px;width:15px;background:#ebe9da"></div>
<div class="bk" style="left:450px;top:300px;width:22px;background:#fff"></div>
<div class="bk" style="left:450px;top:300px;width:21px;background:#a5a5a5"></div>
<div class="bk" style="left:472px;top:300px;width:33px;background:#fff"></div>
<div class="bk" style="left:472px;top:300px;width:32px;background:#ebe9da"></div>
<div class="bk" style="left:505px;top:300px;width:10px;background:#fff"></div>
<div class="bk" style="left:505px;top:300px;width:10px;background:#ebe9da"></div>
<div class="bk" style="left:515px;top:300px;width:15px;background:#fff"></div>
<div class="bk" style="left:515px;top:300px;width:14px;background:#5bab5b"></div>
<div class="bk" style="left:530px;top:300px;width:5px;background:#fff"></div>
<div class="bk" style="left:530px;top:300px;width:5px;background:#ebe9da"></div>
<div class="bk" style="left:535px;top:300px;width:15px;background:#fff"></div>
<div class="bk" style="left:535px;top:300px;width:14px;background:#5bab5b"></div>
<div class="bk" style="left:550px;top:300px;width:10px;background:#fff"></div>
<div class="bk" style="left:550px;top:300px;width:9px;background:#5bab5b"></div>
<div class="bk" style="left:560px;top:300px;width:15px;background:#fff"></div>
<div class="bk" style="left:560px;top:300px;width:14px;background:#ebe9da"></div>
</div><div id="gap"></div><div id="botstrip"></div>
<div id="right"><div id="rh"><span>Wochenübersicht</span></div>
<div class="abs" style="left:180px;top:6px;width:15px;height:14px;box-sizing:border-box;border:1px solid #b8b8b8;border-radius:3px;background:linear-gradient(#fff,#eee)"></div>
<svg class="abs" style="left:183px;top:8px" width="9" height="9" viewBox="0 0 9 9"><path d="M1 1l3 3.5L1 8M5 1l3 3.5L5 8" stroke="#666" stroke-width="1.200" fill="none"/></svg>
<div id="cal">
<div class="cr" style="top:18px;height:1px;background:#737373"></div>
<div class="cr" style="top:38px;height:1px;background:#737373"></div>
<div class="cr" style="top:39px;height:20px;background:repeating-linear-gradient(#d4d4d4 0,#d4d4d4 1px,#c8c8c8 1px,#c8c8c8 2px)"></div>
<div class="cr" style="top:59px;height:1px;background:#737373"></div>
<div class="cr" style="top:60px;height:85px;width:23px;background:repeating-linear-gradient(#d4d4d4 0,#d4d4d4 1px,#c8c8c8 1px,#c8c8c8 2px)"></div>
<div class="abs" style="left:23px;top:39px;width:1px;height:106px;background:#737373"></div>
<div class="cr" style="top:145px;height:1px;background:#737373"></div>
<div class="c" style="left:12px;top:3px;width:120px;margin-left:-60px;text-align:center;">?</div>
<div class="c" style="left:110px;top:3px;width:120px;margin-left:-60px;text-align:center;letter-spacing:0.392px;">Februar, 2014</div>
<div class="c" style="left:97px;top:23px;width:120px;margin-left:-60px;text-align:center;letter-spacing:0.644px;">Heute</div>
<div class="c" style="left:12px;top:22px;width:120px;margin-left:-60px;text-align:center;font-size:12px;font-weight:bold;color:#222">«</div>
<div class="c" style="left:36px;top:22px;width:120px;margin-left:-60px;text-align:center;font-size:12px;font-weight:bold;color:#222">‹</div>
<div class="c" style="left:159px;top:22px;width:120px;margin-left:-60px;text-align:center;font-size:12px;font-weight:bold;color:#222">›</div>
<div class="c" style="left:183px;top:22px;width:120px;margin-left:-60px;text-align:center;font-size:12px;font-weight:bold;color:#222">»</div>
<svg class="abs" style="left:15px;top:30px" width="5" height="3" viewBox="0 0 5 3"><path d="M0 0H5L2.5 3z" fill="#555"/></svg>
<svg class="abs" style="left:39px;top:30px" width="5" height="3" viewBox="0 0 5 3"><path d="M0 0H5L2.5 3z" fill="#555"/></svg>
<svg class="abs" style="left:162px;top:30px" width="5" height="3" viewBox="0 0 5 3"><path d="M0 0H5L2.5 3z" fill="#555"/></svg>
<svg class="abs" style="left:187px;top:30px" width="5" height="3" viewBox="0 0 5 3"><path d="M0 0H5L2.5 3z" fill="#555"/></svg>
<div class="c" style="left:11px;top:43px;width:120px;margin-left:-60px;text-align:center;color:#333">wk</div>
<div class="c" style="left:36px;top:43px;width:120px;margin-left:-60px;text-align:center;color:#1a1a4a;font-style:italic;">Mo</div>
<div class="c" style="left:60px;top:43px;width:120px;margin-left:-60px;text-align:center;color:#1a1a4a;">Di</div>
<div class="c" style="left:84px;top:43px;width:120px;margin-left:-60px;text-align:center;color:#1a1a4a;font-style:italic;">Mi</div>
<div class="c" style="left:108px;top:43px;width:120px;margin-left:-60px;text-align:center;color:#1a1a4a;">Do</div>
<div class="c" style="left:133px;top:43px;width:120px;margin-left:-60px;text-align:center;color:#1a1a4a;">Fr</div>
<div class="c" style="left:158px;top:43px;width:120px;margin-left:-60px;text-align:center;color:#c0504d;">Sa</div>
<div class="c" style="left:183px;top:43px;width:120px;margin-left:-60px;text-align:center;color:#c0504d;">So</div>
<div class="c" style="left:20px;top:63px;width:40px;margin-left:-40px;text-align:right;">5</div>
<div class="c" style="left:168px;top:63px;width:40px;margin-left:-40px;text-align:right;color:#c0504d;">1</div>
<div class="c" style="left:193px;top:63px;width:40px;margin-left:-40px;text-align:right;color:#c0504d;">2</div>
<div class="c" style="left:20px;top:80px;width:40px;margin-left:-40px;text-align:right;">6</div>
<div class="abs" style="left:24px;top:77px;width:23px;height:17px;box-sizing:border-box;border:1px solid #6a7a9a;background:#3366cc"></div>
<div class="c" style="left:45px;top:80px;width:40px;margin-left:-40px;text-align:right;color:#fff;font-weight:bold;">3</div>
<div class="c" style="left:69px;top:80px;width:40px;margin-left:-40px;text-align:right;">4</div>
<div class="c" style="left:94px;top:80px;width:40px;margin-left:-40px;text-align:right;">5</div>
<div class="c" style="left:118px;top:80px;width:40px;margin-left:-40px;text-align:right;">6</div>
<div class="c" style="left:143px;top:80px;width:40px;margin-left:-40px;text-align:right;font-weight:bold;">7</div>
<div class="c" style="left:168px;top:80px;width:40px;margin-left:-40px;text-align:right;color:#c0504d;">8</div>
<div class="c" style="left:193px;top:80px;width:40px;margin-left:-40px;text-align:right;color:#c0504d;">9</div>
<div class="c" style="left:20px;top:97px;width:40px;margin-left:-40px;text-align:right;">7</div>
<div class="c" style="left:44px;top:97px;width:40px;margin-left:-40px;text-align:right;">10</div>
<div class="c" style="left:68px;top:97px;width:40px;margin-left:-40px;text-align:right;">11</div>
<div class="c" style="left:93px;top:97px;width:40px;margin-left:-40px;text-align:right;">12</div>
<div class="c" style="left:117px;top:97px;width:40px;margin-left:-40px;text-align:right;">13</div>
<div class="c" style="left:142px;top:97px;width:40px;margin-left:-40px;text-align:right;">14</div>
<div class="c" style="left:167px;top:97px;width:40px;margin-left:-40px;text-align:right;color:#c0504d;">15</div>
<div class="c" style="left:192px;top:97px;width:40px;margin-left:-40px;text-align:right;color:#c0504d;">16</div>
<div class="c" style="left:20px;top:114px;width:40px;margin-left:-40px;text-align:right;">8</div>
<div class="c" style="left:44px;top:114px;width:40px;margin-left:-40px;text-align:right;">17</div>
<div class="c" style="left:68px;top:114px;width:40px;margin-left:-40px;text-align:right;">18</div>
<div class="c" style="left:93px;top:114px;width:40px;margin-left:-40px;text-align:right;">19</div>
<div class="c" style="left:117px;top:114px;width:40px;margin-left:-40px;text-align:right;">20</div>
<div class="c" style="left:142px;top:114px;width:40px;margin-left:-40px;text-align:right;">21</div>
<div class="c" style="left:167px;top:114px;width:40px;margin-left:-40px;text-align:right;color:#c0504d;">22</div>
<div class="c" style="left:192px;top:114px;width:40px;margin-left:-40px;text-align:right;color:#c0504d;">23</div>
<div class="c" style="left:20px;top:131px;width:40px;margin-left:-40px;text-align:right;">9</div>
<div class="c" style="left:44px;top:131px;width:40px;margin-left:-40px;text-align:right;">24</div>
<div class="c" style="left:68px;top:131px;width:40px;margin-left:-40px;text-align:right;">25</div>
<div class="c" style="left:93px;top:131px;width:40px;margin-left:-40px;text-align:right;">26</div>
<div class="c" style="left:117px;top:131px;width:40px;margin-left:-40px;text-align:right;">27</div>
<div class="c" style="left:142px;top:131px;width:40px;margin-left:-40px;text-align:right;">28</div>
<div class="c" style="left:0;top:148px;width:196px;text-align:center;color:#777">Datum auswählen</div>
</div>
<div class="abs" style="left:0;top:193px;width:198px;height:25px;background:linear-gradient(#f8f8f8,#d6d6d6);border-top:1px solid #c8c8c8;border-bottom:1px solid #c4c4c4;box-sizing:border-box"></div>
<div class="leg" style="top:220px;background:#e33a22"></div>
<div class="leg" style="top:239px;background:#5bab5b">Gebucht</div>
<div class="leg" style="top:258px;background:#6b85e0">Abgeholt</div>
<div class="leg" style="top:277px;background:#a5a5a5">Zurückgebracht</div>
<div class="p" style="top:300px;letter-spacing:0.240px">Der Beginn der Wochenansicht</div>
<div class="p" style="top:313px;letter-spacing:0.253px">kann durch die Auswahl eines</div>
<div class="p" style="top:326px;letter-spacing:0.284px">Datums im Kalender verändert</div>
<div class="p" style="top:339px;letter-spacing:0.355px">werden.</div>
<div class="p" style="top:358px;letter-spacing:0.200px">Diese Navigationsleiste kann mit</div>
<div class="p" style="top:371px;letter-spacing:0.246px">der Schaltfläche [&gt;&gt;] oben</div>
<div class="p" style="top:384px;letter-spacing:0.213px">rechts ausgeblendet werden.</div>
<div class="p" style="top:397px;letter-spacing:0.216px">Danach kann die Navigation mit</div>
<div class="p" style="top:410px;letter-spacing:0.265px">[&lt;&lt;] wieder dauerhaft oder</div>
<div class="p" style="top:423px;letter-spacing:0.264px">durch anklicken des Rahmens</div>
<div class="p" style="top:436px;letter-spacing:0.200px">temporär eingeblendet werden</div>
<div class="p" style="top:455px;letter-spacing:0.213px">Die Wochenansicht wird</div>
<div class="p" style="top:468px;letter-spacing:0.112px">automatisch nach 2 Minuten</div>
<div class="p" style="top:481px;letter-spacing:0.243px">aktualisiert.</div>
<div class="p" style="left:12px;top:748px;letter-spacing:0.240px">Aktualisiert: 07.02.2014 17:04</div>
</div>
<div id="tip"><span class="abs" style="left:5px;top:6px;color:#999;white-space:nowrap;letter-spacing:0.269px">08.02.2014 10:00 - 11:00</span><span class="abs" style="right:5px;top:7px;color:#999;font-family:'Liberation Sans',sans-serif;font-size:12px;letter-spacing:-0.2px">HB-SFS</span><span class="abs" style="left:5px;top:27px;white-space:nowrap;letter-spacing:0.299px">Reznitskiy Dmitriy (Test registration, I will remove it</span><span class="abs" style="left:5px;top:40px;white-space:nowrap;letter-spacing:0.075px">shortly after)</span></div>
</div>
</body>
</html>
